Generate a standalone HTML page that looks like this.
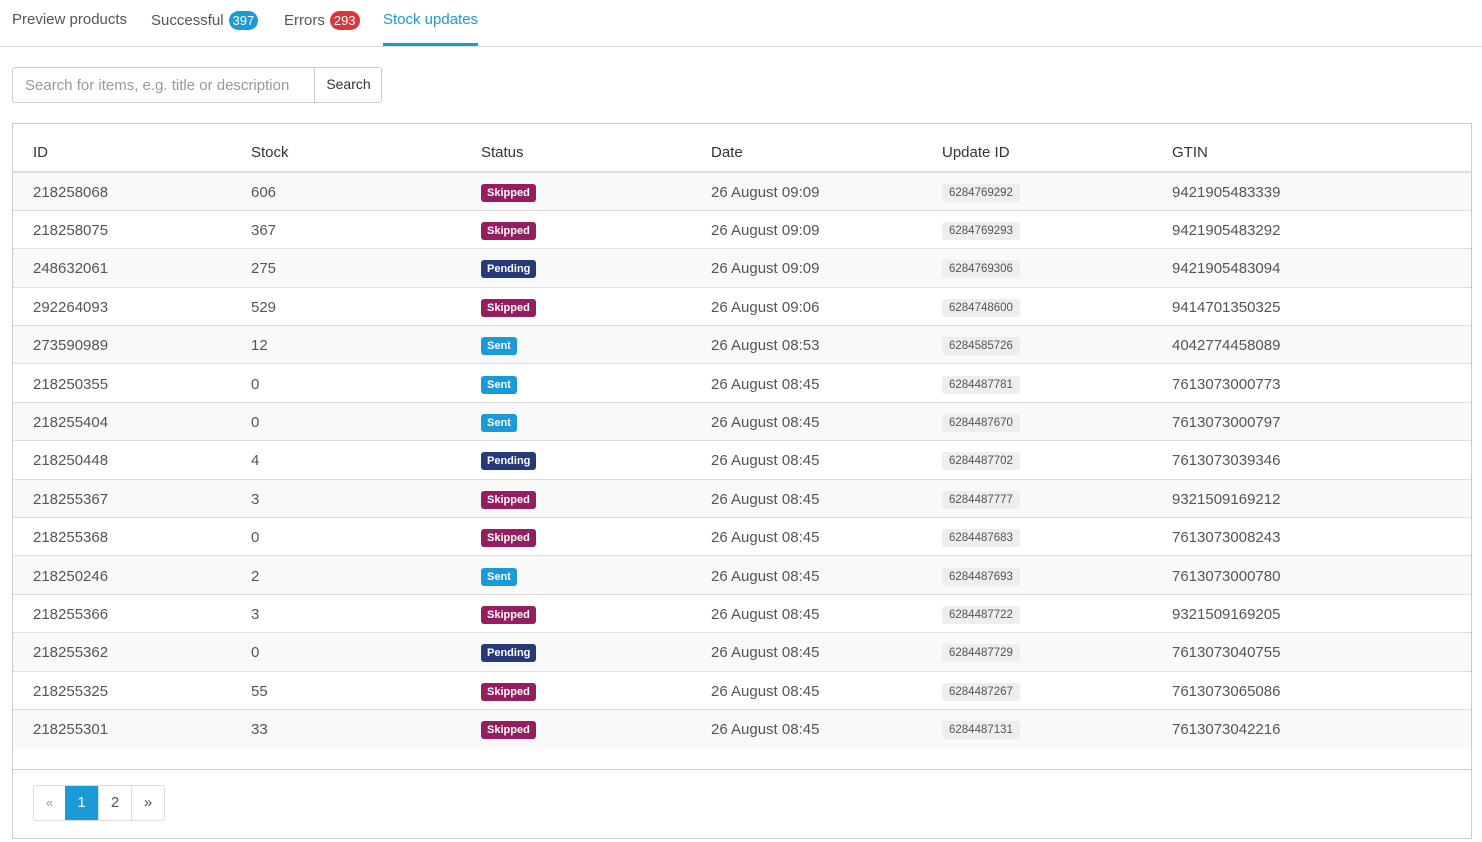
<!DOCTYPE html>
<html><head><meta charset="utf-8"><style>
*{box-sizing:border-box;margin:0;padding:0}
body{width:1482px;height:842px;background:#fff;font-family:"Liberation Sans",sans-serif;color:#555;font-size:15px;overflow:hidden;position:relative}
.tabs{position:absolute;left:0;top:0;width:1482px;height:47px;border-bottom:1px solid #ddd}
.tab{position:absolute;top:11px;font-size:15px;color:#555;white-space:nowrap}
.badge{display:inline-block;color:#fff;font-size:13px;border-radius:10px;padding:1px 4px;margin-left:5px;line-height:17px}
.active{color:#1a9bd7}
.uline{position:absolute;left:383px;top:43px;width:95px;height:3px;background:#1a9bd7}
.search{position:absolute;left:12px;top:67px;width:370px;height:36px;border:1px solid #ccc;border-radius:3px}
.search .ph{position:absolute;left:12px;top:9px;color:#999;font-size:15px}
.search .btn{position:absolute;left:301px;top:0;width:68px;height:34px;border-left:1px solid #ccc;color:#333;font-size:14px;text-align:center;line-height:33px}
.panel{position:absolute;left:12px;top:123px;width:1460px;height:716px;border:1px solid #ccc}
table{position:absolute;left:0;top:0;width:1458px;border-collapse:collapse;table-layout:fixed}
th{height:48px;text-align:left;font-weight:normal;color:#333;font-size:15px;padding:9px 0 0 20px;border-bottom:2px solid #ddd}
td{height:38.4px;padding:2px 0 0 20px;border-top:1px solid #ddd;font-size:15px}
tr.o td{background:#f9f9f9}
tbody tr:first-child td{border-top:none}
.l{display:inline-block;color:#fff;font-size:11px;font-weight:bold;padding:2px 6px;border-radius:3px;line-height:14px;vertical-align:middle;margin-top:1px}
.sk{background:#961d5f}.pe{background:#243a7a}.se{background:#1a9bd7}
.u{display:inline-block;background:#eee;font-size:11.5px;padding:3px 7px;border-radius:3px;color:#555;margin-top:1px}
.foot{position:absolute;left:0;top:645px;width:1458px;border-top:1px solid #ccc}
.pg{position:absolute;left:20px;top:661px;height:36px;display:flex;border:1px solid #ddd;border-radius:3px}
.pg div{width:33px;height:34px;text-align:center;line-height:34px;border-left:1px solid #ddd;color:#555}
.pg div:first-child{border-left:none;color:#999;font-size:13px;width:31px}
.pg .a{background:#1a9bd7;color:#fff;border-left:none}
</style></head><body>
<div class="tabs">
<div class="tab" style="left:12px">Preview products</div>
<div class="tab" style="left:151px">Successful<span class="badge" style="background:#1a9bd7">397</span></div>
<div class="tab" style="left:284px">Errors<span class="badge" style="background:#d9363e">293</span></div>
<div class="tab active" style="left:383px">Stock updates</div>
<div class="uline"></div>
</div>
<div class="search"><div class="ph">Search for items, e.g. title or description</div><div class="btn">Search</div></div>
<div class="panel">
<table>
<colgroup><col style="width:218px"><col style="width:230px"><col style="width:230px"><col style="width:231px"><col style="width:230px"><col></colgroup>
<thead><tr><th>ID</th><th>Stock</th><th>Status</th><th>Date</th><th>Update ID</th><th>GTIN</th></tr></thead>
<tbody>
<tr class="o"><td>218258068</td><td>606</td><td><span class="l sk">Skipped</span></td><td>26 August 09:09</td><td><span class="u">6284769292</span></td><td>9421905483339</td></tr>
<tr><td>218258075</td><td>367</td><td><span class="l sk">Skipped</span></td><td>26 August 09:09</td><td><span class="u">6284769293</span></td><td>9421905483292</td></tr>
<tr class="o"><td>248632061</td><td>275</td><td><span class="l pe">Pending</span></td><td>26 August 09:09</td><td><span class="u">6284769306</span></td><td>9421905483094</td></tr>
<tr><td>292264093</td><td>529</td><td><span class="l sk">Skipped</span></td><td>26 August 09:06</td><td><span class="u">6284748600</span></td><td>9414701350325</td></tr>
<tr class="o"><td>273590989</td><td>12</td><td><span class="l se">Sent</span></td><td>26 August 08:53</td><td><span class="u">6284585726</span></td><td>4042774458089</td></tr>
<tr><td>218250355</td><td>0</td><td><span class="l se">Sent</span></td><td>26 August 08:45</td><td><span class="u">6284487781</span></td><td>7613073000773</td></tr>
<tr class="o"><td>218255404</td><td>0</td><td><span class="l se">Sent</span></td><td>26 August 08:45</td><td><span class="u">6284487670</span></td><td>7613073000797</td></tr>
<tr><td>218250448</td><td>4</td><td><span class="l pe">Pending</span></td><td>26 August 08:45</td><td><span class="u">6284487702</span></td><td>7613073039346</td></tr>
<tr class="o"><td>218255367</td><td>3</td><td><span class="l sk">Skipped</span></td><td>26 August 08:45</td><td><span class="u">6284487777</span></td><td>9321509169212</td></tr>
<tr><td>218255368</td><td>0</td><td><span class="l sk">Skipped</span></td><td>26 August 08:45</td><td><span class="u">6284487683</span></td><td>7613073008243</td></tr>
<tr class="o"><td>218250246</td><td>2</td><td><span class="l se">Sent</span></td><td>26 August 08:45</td><td><span class="u">6284487693</span></td><td>7613073000780</td></tr>
<tr><td>218255366</td><td>3</td><td><span class="l sk">Skipped</span></td><td>26 August 08:45</td><td><span class="u">6284487722</span></td><td>9321509169205</td></tr>
<tr class="o"><td>218255362</td><td>0</td><td><span class="l pe">Pending</span></td><td>26 August 08:45</td><td><span class="u">6284487729</span></td><td>7613073040755</td></tr>
<tr><td>218255325</td><td>55</td><td><span class="l sk">Skipped</span></td><td>26 August 08:45</td><td><span class="u">6284487267</span></td><td>7613073065086</td></tr>
<tr class="o"><td>218255301</td><td>33</td><td><span class="l sk">Skipped</span></td><td>26 August 08:45</td><td><span class="u">6284487131</span></td><td>7613073042216</td></tr>
</tbody></table>
<div class="foot"></div>
<div class="pg"><div>«</div><div class="a">1</div><div>2</div><div>»</div></div>
</div>
</body></html>
